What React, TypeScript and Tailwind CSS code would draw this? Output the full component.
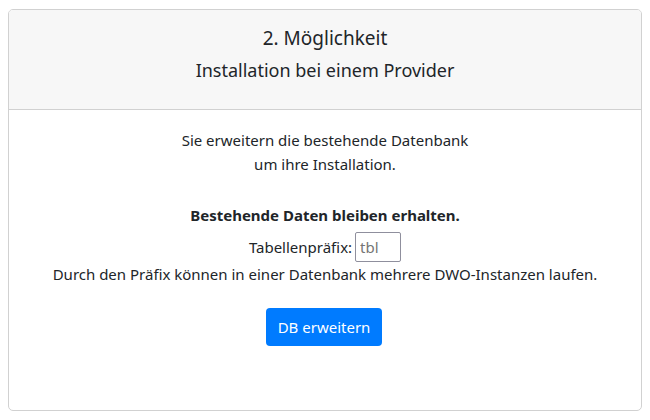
export default function App() {
  return (
    <div className="w-[650px] h-[420px] bg-white pt-[9px] px-[8px]" style={{ fontFamily: '"Noto Sans", sans-serif' }}>
      <div className="h-[402px] border border-[#d1d1d1] rounded-[5px] overflow-hidden flex flex-col text-[#212529]">
        <div className="h-[100px] bg-[#f7f7f7] border-b border-[#d1d1d1] flex flex-col items-center pt-[16px]">
          <div className="text-[19px] leading-[24px]">2. Möglichkeit</div>
          <div className="text-[18px] leading-[24px] mt-[8px]">Installation bei einem Provider</div>
        </div>
        <div className="flex flex-col items-center pt-[18px] text-[15px] leading-[24px]">
          <div>Sie erweitern die bestehende Datenbank</div>
          <div>um ihre Installation.</div>
          <div className="font-bold mt-[27px]">Bestehende Daten bleiben erhalten.</div>
          <div className="flex items-center mt-[5px] h-[30px]">
            <span>Tabellenpräfix:</span>
            <input className="ml-[3px] w-[46px] h-[30px] border border-[#8f8f9d] rounded-[2px] px-[4px] text-[15px] text-[#212529] placeholder:text-[#757575] outline-none" placeholder="tbl" />
          </div>
          <div>Durch den Präfix können in einer Datenbank mehrere DWO-Instanzen laufen.</div>
          <button className="mt-[22px] mr-[2px] h-[38px] w-[116px] bg-[#007bff] text-white rounded-[4px] text-[15px]">DB erweitern</button>
        </div>
      </div>
    </div>
  );
}
